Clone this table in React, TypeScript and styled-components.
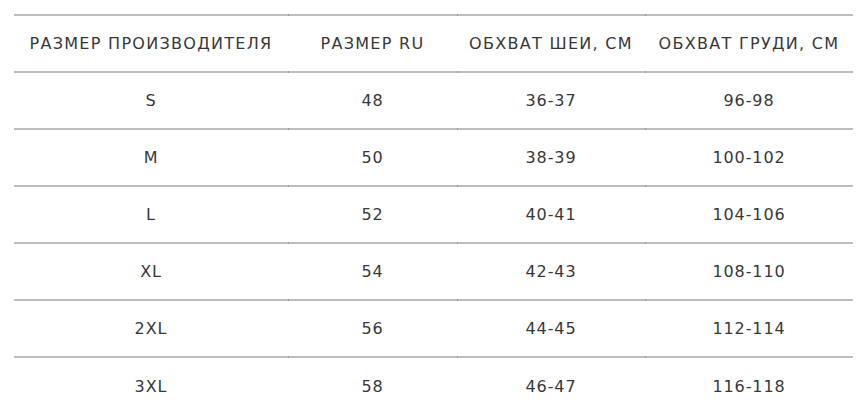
import React from 'react';
import styled, { createGlobalStyle } from 'styled-components';

const GlobalStyle = createGlobalStyle`
  body {
    margin: 0;
    background: #fff;
    font-family: "DejaVu Sans", "Noto Sans", sans-serif;
  }
`;

interface SizeRow {
  maker: string;
  ru: string;
  neck: string;
  chest: string;
}

const HEADERS = ['РАЗМЕР ПРОИЗВОДИТЕЛЯ', 'РАЗМЕР RU', 'ОБХВАТ ШЕИ, СМ', 'ОБХВАТ ГРУДИ, СМ'];

const ROWS: SizeRow[] = [
  { maker: 'S', ru: '48', neck: '36-37', chest: '96-98' },
  { maker: 'M', ru: '50', neck: '38-39', chest: '100-102' },
  { maker: 'L', ru: '52', neck: '40-41', chest: '104-106' },
  { maker: 'XL', ru: '54', neck: '42-43', chest: '108-110' },
  { maker: '2XL', ru: '56', neck: '44-45', chest: '112-114' },
  { maker: '3XL', ru: '58', neck: '46-47', chest: '116-118' }
];

const WIDTHS = [274, 169, 188, 208];

const Wrapper = styled.div`
  padding: 14px 13px 0 14px;
`;

const Table = styled.table`
  width: 839px;
  table-layout: fixed;
  border-collapse: collapse;
  color: #383838;
  font-size: 16px;
  letter-spacing: 0.9px;
`;

const Row = styled.tr`
  height: 57px;
`;

const Cell = styled.td<{ $width: number }>`
  width: ${props => props.$width}px;
  position: relative;
  padding: 0;
  text-align: center;
  vertical-align: middle;
  border-top: 2px solid #bdbdbd;
  font-weight: 400;
  white-space: nowrap;

  &:not(:first-child)::before {
    content: '';
    position: absolute;
    left: 0;
    top: -2px;
    width: 1px;
    height: 2px;
    background: #999;
  }
`;

const HeadCell = styled(Cell).attrs({ as: 'th' })`
  border-bottom: 2px solid #bdbdbd;
  letter-spacing: 1.3px;
`;

export default function App() {
  return (
    <>
      <GlobalStyle />
      <Wrapper>
        <Table>
          <thead>
            <Row>
              {HEADERS.map((h, i) => (
                <HeadCell key={h} $width={WIDTHS[i]}>{h}</HeadCell>
              ))}
            </Row>
          </thead>
          <tbody>
            {ROWS.map(row => (
              <Row key={row.maker}>
                <Cell $width={WIDTHS[0]}>{row.maker}</Cell>
                <Cell $width={WIDTHS[1]}>{row.ru}</Cell>
                <Cell $width={WIDTHS[2]}>{row.neck}</Cell>
                <Cell $width={WIDTHS[3]}>{row.chest}</Cell>
              </Row>
            ))}
          </tbody>
        </Table>
      </Wrapper>
    </>
  );
}
